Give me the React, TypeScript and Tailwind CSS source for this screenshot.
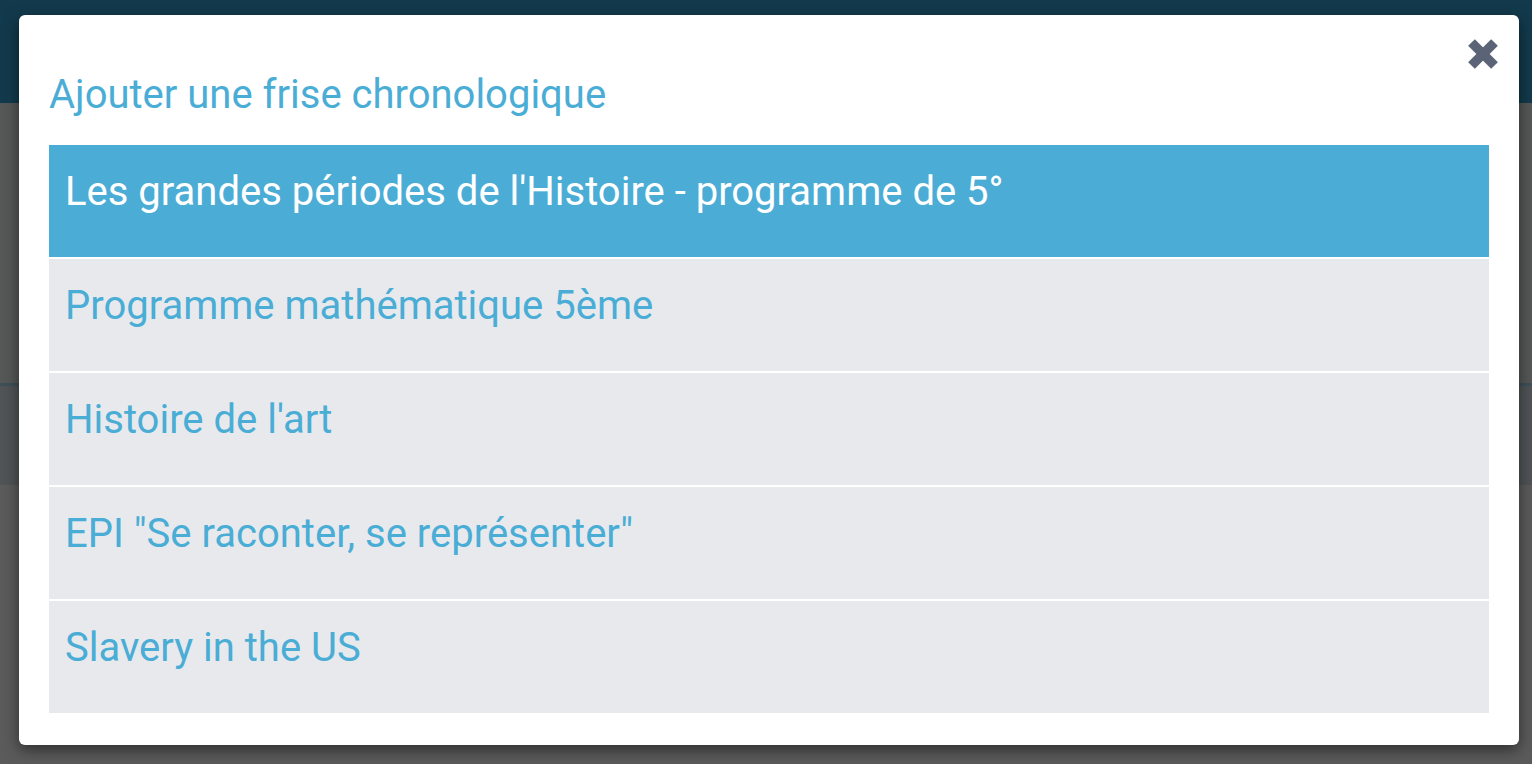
import React from "react";

const items = [
  "Les grandes périodes de l'Histoire - programme de 5°",
  "Programme mathématique 5ème",
  "Histoire de l'art",
  'EPI "Se raconter, se représenter"',
  "Slavery in the US",
];

export default function App() {
  return (
    <div
      className="relative h-[764px] w-full overflow-hidden bg-[#5a5b5a]"
      style={{ fontFamily: "Roboto, 'Noto Sans', sans-serif" }}
    >
      <div className="flex flex-col">
        <div className="h-[103px] bg-[#123a4c]" />
        <div className="h-[280px] bg-[#565757]" />
        <div className="h-[3px] bg-[#3e5058]" />
        <div className="h-[99px] bg-[#505456]" />
      </div>

      <div className="absolute left-[19px] top-[15px] w-[1500px] rounded-[6px] bg-white px-[30px] pb-[32px] pt-[58px] shadow-[0_5px_15px_rgba(0,0,0,0.5)]">
        <button className="absolute right-[20px] top-[23px] h-[32px] w-[32px]" aria-label="Fermer">
          <svg viewBox="0 0 32 32" width="32" height="32">
            <line x1="4.5" y1="4.5" x2="27.5" y2="27.5" stroke="#5b6477" strokeWidth="9.5" />
            <line x1="27.5" y1="4.5" x2="4.5" y2="27.5" stroke="#5b6477" strokeWidth="9.5" />
          </svg>
        </button>
        <h2 className="mb-[28px] text-[40px] font-normal leading-[44px] text-[#4aadd5]">
          Ajouter une frise chronologique
        </h2>
        <div className="flex flex-col gap-[2px]">
          {items.map((t, i) => (
            <div
              key={t}
              className={
                i === 0
                  ? "h-[112px] bg-[#4badd5] px-[16px] pt-[25px] text-[40px] leading-[44px] text-white"
                  : "h-[112px] bg-[#e8e9ed] px-[16px] pt-[25px] text-[40px] leading-[44px] text-[#4aadd5]"
              }
            >
              {t}
            </div>
          ))}
        </div>
      </div>
    </div>
  );
}
